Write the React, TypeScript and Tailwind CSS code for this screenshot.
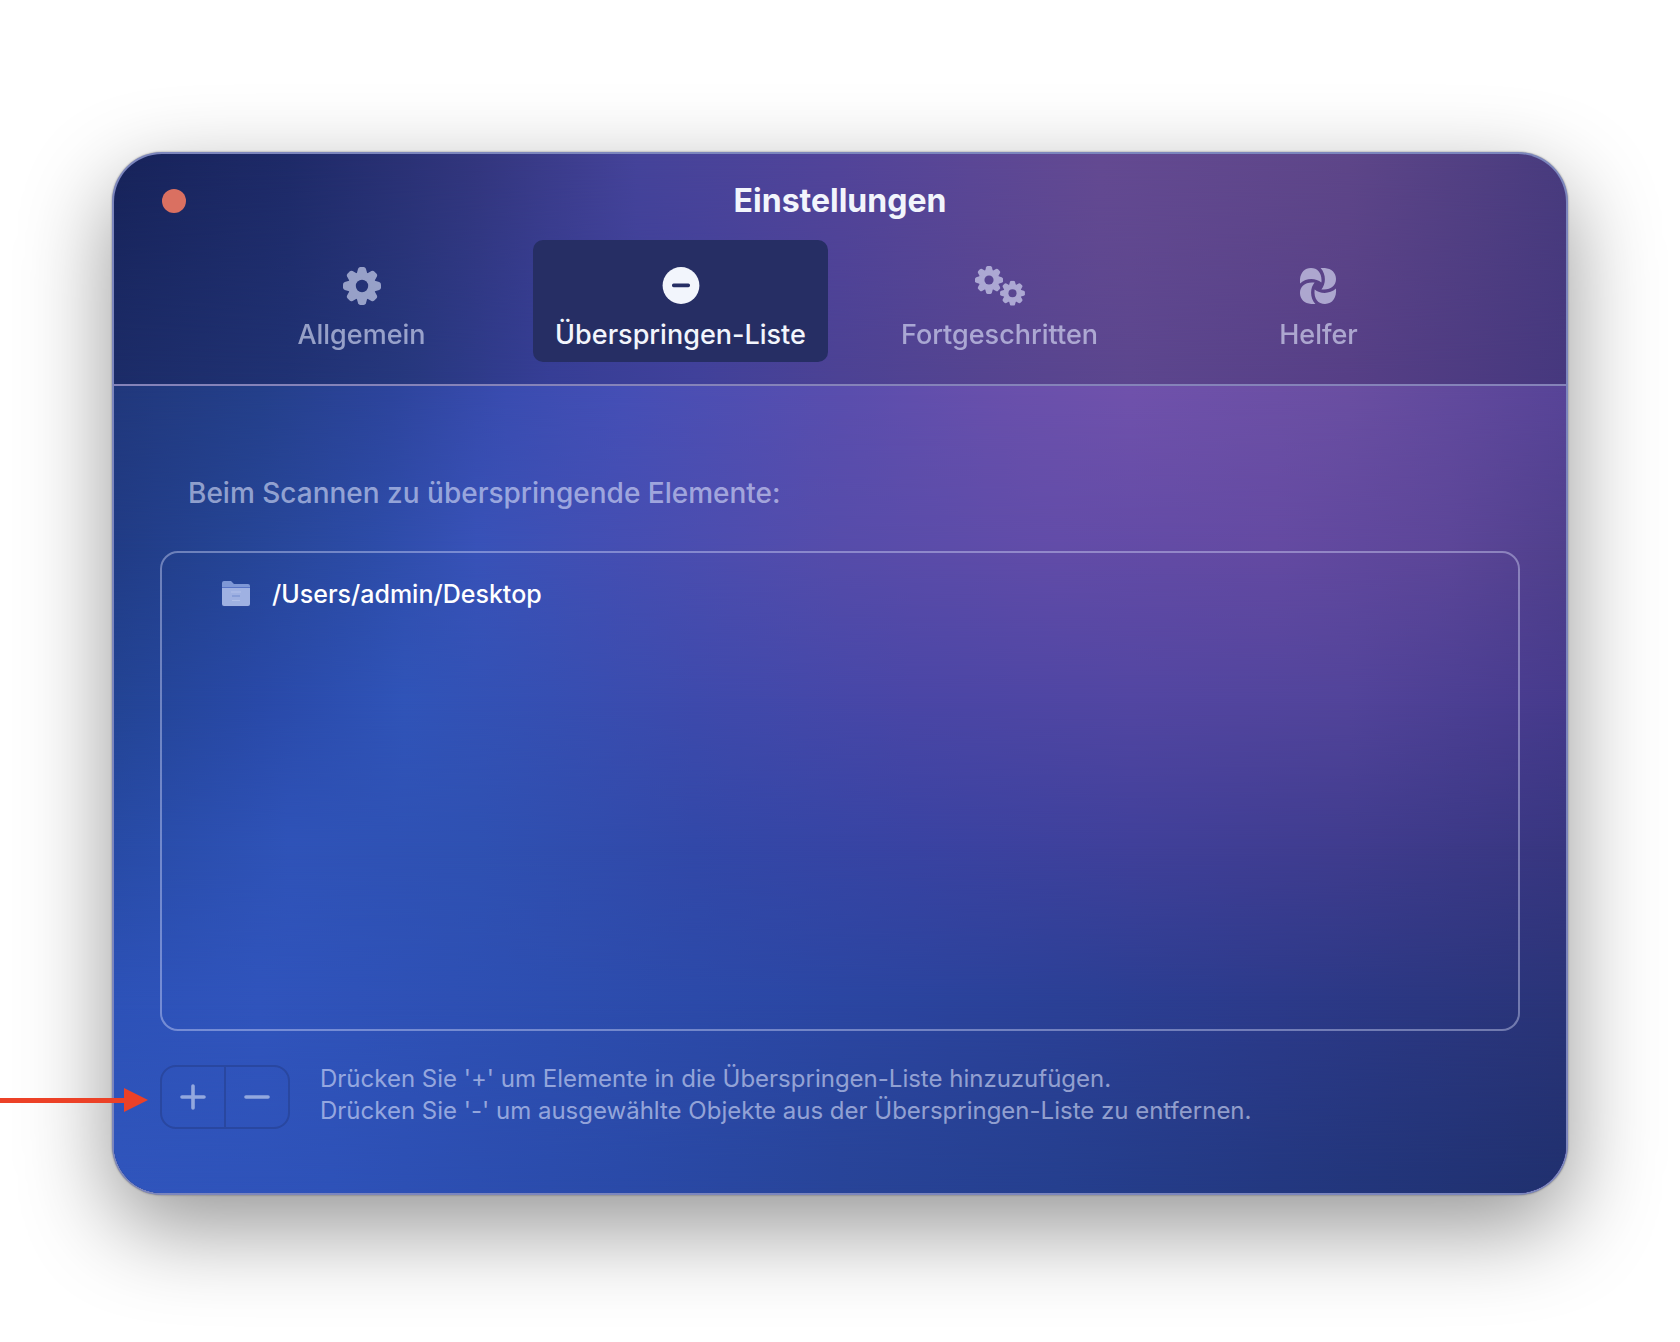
import { useState } from "react";
import type { ReactNode } from "react";

type TabId = "general" | "skip" | "advanced" | "helper";

function Gear({ cx, cy, r, id }: { cx: number; cy: number; r: number; id: string }) {
  return (
    <g transform={`translate(${cx} ${cy}) scale(${r / 19})`}>
      <mask id={id} maskUnits="userSpaceOnUse" x="-20" y="-20" width="40" height="40">
        <rect x="-20" y="-20" width="40" height="40" fill="white" />
        <circle r="6.2" fill="black" />
      </mask>
      <g mask={`url(#${id})`}>
        <circle r="13.8" />
        {[0, 45, 90, 135, 180, 225, 270, 315].map((a) => (
          <path
            key={a}
            transform={`rotate(${a})`}
            d="M-5.4 -12 L-3.9 -17.2 Q-3.3 -19 -1.6 -19 H1.6 Q3.3 -19 3.9 -17.2 L5.4 -12 Z"
          />
        ))}
      </g>
    </g>
  );
}

function GearIcon() {
  return (
    <svg width="38" height="38" viewBox="0 0 38 38" fill="currentColor" aria-hidden="true">
      <Gear cx={19} cy={19} r={19} id="gear" />
    </svg>
  );
}

function SkipIcon() {
  return (
    <svg width="38" height="38" viewBox="0 0 38 38" aria-hidden="true">
      <circle cx="19" cy="18.5" r="18.4" fill="#f2f5fc" />
      <rect x="10" y="16.6" width="18" height="3.6" rx="1.6" fill="#262e64" />
    </svg>
  );
}

function GearsIcon() {
  return (
    <svg width="50" height="40" viewBox="0 0 50 40" fill="currentColor" aria-hidden="true">
      <Gear cx={14} cy={14} r={14} id="gears-a" />
      <Gear cx={37.5} cy={27.2} r={12.4} id="gears-b" />
    </svg>
  );
}

function HelperIcon() {
  return (
    <svg width="38" height="36" viewBox="0 0 38 36" fill="currentColor" aria-hidden="true">
      {[0, 90, 180, 270].map((a) => (
        <path
          key={a}
          transform={`rotate(${a} 18 18)`}
          d="M0 15.4 C-0.8 6.4 3.4 0 11 0 C17.8 0 22.4 5.4 21.4 14.6 C16 10 6.4 9.6 0 15.4 Z"
        />
      ))}
    </svg>
  );
}

function FolderIcon() {
  return (
    <svg width="30" height="28" viewBox="0 0 30 28" aria-hidden="true">
      <path d="M1 3 Q1 1 3 1 H10 L13 4 H27 Q29 4 29 6 V9 H1 Z" fill="#7f98d6" />
      <path d="M1 7 H29 V25 Q29 27 27 27 H3 Q1 27 1 25 Z" fill="#2c479c" />
      <path d="M1 7 H29 V24 Q29 26 27 26 H3 Q1 26 1 24 Z" fill="#9fb1e2" />
      <path d="M1 7.5 H29" stroke="#5874c6" strokeWidth="1" />
      <path d="M11 16 H19" stroke="#7a92d2" strokeWidth="1.2" />
      <path d="M10 12 H20 M11 20.5 H19" stroke="#b3c1ea" strokeWidth="1" />
    </svg>
  );
}

const tabs: { id: TabId; label: string; icon: ReactNode }[] = [
  { id: "general", label: "Allgemein", icon: <GearIcon /> },
  { id: "skip", label: "Überspringen-Liste", icon: <SkipIcon /> },
  { id: "advanced", label: "Fortgeschritten", icon: <GearsIcon /> },
  { id: "helper", label: "Helfer", icon: <HelperIcon /> },
];

// Each layer is one horizontal sweep; the masks fade it into the layer above.
const headerLayers = [
  "bg-[linear-gradient(to_right,#17235a,#1e2a68_12%,#33367e_25%,#45439a_36%,#52449a_50%,#644a92_68%,#5e4689_85%,#483b7e)]",
  "bg-[linear-gradient(to_right,#1c2c68,#203274_12%,#26387e_20%,#363e96_30%,#40419a_40%,#4c4294_50%,#554490_60%,#5c468e_70%,#563f86_85%,#46387e)] [mask-image:linear-gradient(transparent,black)]",
];

const bodyLayers = [
  "bg-[linear-gradient(to_right,#21387c,#243f8a_10%,#2d449c_19%,#3a4cb0_27%,#454fb6_35%,#5a4eae_50%,#6850ac_60%,#7052ac_70%,#6a4fa2_85%,#584498)]",
  "bg-[linear-gradient(to_right,#213c86,#254494_8%,#2d4ca8_18%,#3852b8_25%,#454eb2_35%,#564caa_50%,#624ca8_65%,#644aa2_80%,#5c4698_92%,#50408c)] [mask-image:linear-gradient(transparent,black_20%)]",
  "bg-[linear-gradient(to_right,#234494,#2949a8_10%,#3054b8_20%,#364fb2_30%,#3e4aac_40%,#4a46a6_55%,#5246a2_70%,#52449a_85%,#463a8c)] [mask-image:linear-gradient(transparent_20%,black_39%)]",
  "bg-[linear-gradient(to_right,#284ba6,#2f53b8_12%,#2f51b2_25%,#3248a8_40%,#3943a2_55%,#40409a_70%,#403c8e_85%,#383680)] [mask-image:linear-gradient(transparent_39%,black_57%)]",
  "bg-[linear-gradient(to_right,#2d52b8,#3054bc_10%,#2d4eb0_30%,#2b46a2_50%,#2b4096_65%,#2c3a8a_80%,#2a3478)] [mask-image:linear-gradient(transparent_57%,black_76%)]",
  "bg-[linear-gradient(to_right,#3055bc,#2e52b8_15%,#2a4aa8_35%,#284498_50%,#253f8e_65%,#233880_80%,#20306e)] [mask-image:linear-gradient(transparent_76%,black)]",
];

function Backdrop({ layers }: { layers: string[] }) {
  return (
    <>
      {layers.map((layer) => (
        <div key={layer} className={`absolute inset-0 -z-10 ${layer}`} />
      ))}
    </>
  );
}

function Pointer() {
  return (
    <svg
      className="absolute bottom-[83px] -left-28"
      width="148"
      height="24"
      viewBox="0 0 148 24"
      fill="#ec4127"
      aria-hidden="true"
    >
      <rect y="10" width="126" height="5" />
      <path d="M124 0 L148 12 L124 24 Z" />
    </svg>
  );
}

export default function App() {
  const [active, setActive] = useState<TabId>("skip");

  return (
    <main className="min-h-screen bg-white px-28 pt-[152px] pb-[148px] font-['Inter',sans-serif]">
      <div className="relative">
        <section className="overflow-hidden rounded-[50px] bg-[#7c86bd] p-0.5 shadow-[0_0_2px_rgba(0,0,0,0.45),0_32px_90px_rgba(0,0,0,0.42)]">
          <div className="overflow-hidden rounded-[48px]">
            <header className="relative isolate border-b-2 border-[#8583b9] pt-[27px] pb-[22px]">
              <Backdrop layers={headerLayers} />
              <div className="grid h-10 grid-cols-[1fr_auto_1fr] items-center px-12">
                <button
                  type="button"
                  aria-label="Schließen"
                  className="size-6 rounded-full bg-[#da7061]"
                />
                <h1 className="text-[32px] leading-10 font-bold text-[#f2f5fc]">
                  Einstellungen
                </h1>
              </div>

              <nav className="mt-[19px] grid grid-cols-4 gap-6 px-[100px]">
                {tabs.map((t) => (
                  <button
                    key={t.id}
                    type="button"
                    onClick={() => setActive(t.id)}
                    aria-pressed={active === t.id}
                    className={`flex flex-col items-center gap-[13px] rounded-[10px] pt-[26px] pb-[11px] text-[27px] leading-8 font-medium whitespace-nowrap ${
                      active === t.id ? "bg-[#262e64] text-[#f2f5fc]" : "text-[#e4eaff] opacity-60"
                    }`}
                  >
                    <span className="flex h-10 items-center">{t.icon}</span>
                    {t.label}
                  </button>
                ))}
              </nav>
            </header>

            <div className="relative isolate px-[46px] pt-[87px] pb-[62px]">
              <Backdrop layers={bodyLayers} />
              <h2 className="pl-7 text-[28px] leading-10 font-medium text-[#e4eaff]/58">
                Beim Scannen zu überspringende Elemente:
              </h2>

              <ul className="mt-[38px] min-h-[480px] rounded-[18px] border-2 border-[#dfe4ff]/40 pt-[25px]">
                <li className="flex items-center gap-[21px] pl-[59px] text-[25px] leading-8 font-medium text-white">
                  <FolderIcon />
                  /Users/admin/Desktop
                </li>
              </ul>

              <div className="mt-8 flex items-center gap-[30px]">
                <div className="flex h-16 shrink-0 divide-x-2 divide-[#2947a0] rounded-2xl border-2 border-[#2947a0] text-[#93a8de]">
                  <button
                    type="button"
                    aria-label="Hinzufügen"
                    className="flex w-16 items-center justify-center"
                  >
                    <svg width="26" height="26" viewBox="0 0 26 26" stroke="currentColor" strokeWidth="3.6" strokeLinecap="round">
                      <path d="M2 13 H24 M13 2 V24" />
                    </svg>
                  </button>
                  <button
                    type="button"
                    aria-label="Entfernen"
                    className="flex w-[62px] items-center justify-center"
                  >
                    <svg width="26" height="26" viewBox="0 0 26 26" stroke="currentColor" strokeWidth="3.6" strokeLinecap="round">
                      <path d="M2 13 H24" />
                    </svg>
                  </button>
                </div>
                <p className="pb-1 text-2xl leading-8 text-[#e4eaff]/58">
                  Drücken Sie '+' um Elemente in die Überspringen-Liste hinzuzufügen.
                  <br />
                  Drücken Sie '-' um ausgewählte Objekte aus der Überspringen-Liste zu entfernen.
                </p>
              </div>
            </div>
          </div>
        </section>
        <Pointer />
      </div>
    </main>
  );
}
